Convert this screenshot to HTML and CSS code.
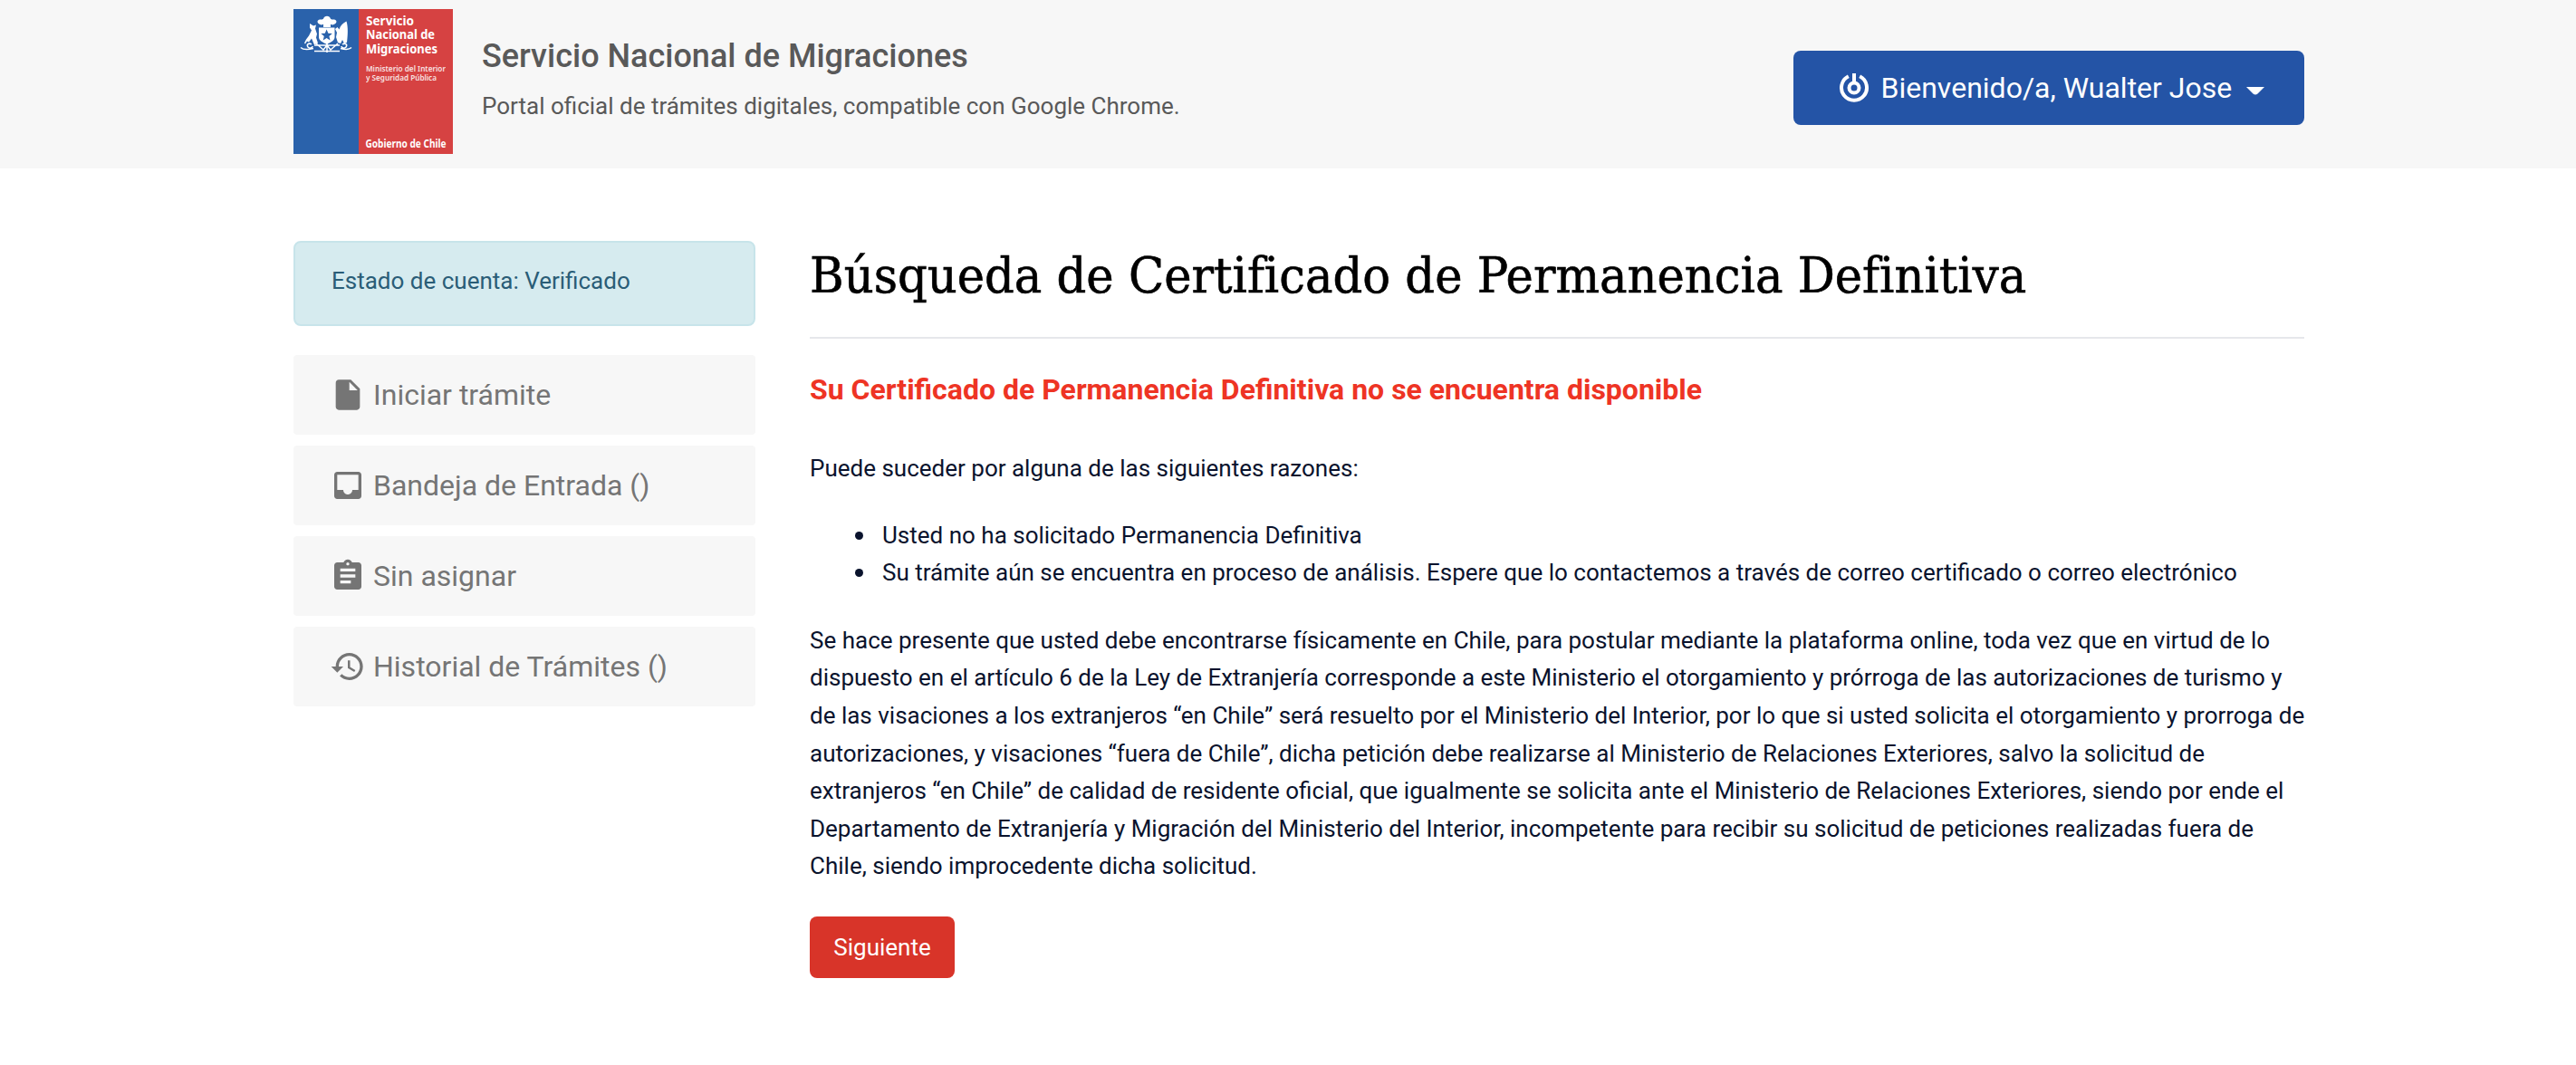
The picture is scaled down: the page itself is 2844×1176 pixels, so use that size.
FILE: index.html
```html
<!DOCTYPE html>
<html lang="es">
<head>
<meta charset="utf-8">
<title>Servicio Nacional de Migraciones</title>
<link rel="stylesheet" href="styles.css">
</head>
<body>
<header class="site-header">
  <div class="container header-row">
    <svg class="logo" viewBox="0 0 176 160" width="176" height="160" role="img" aria-label="Gobierno de Chile">
      <rect width="72" height="160" fill="#2a62ab"/>
      <rect x="72" width="104" height="160" fill="#d64242"/>
      <g fill="#fff">
        <path d="M31 17.500c-5-1-6-5-2-6 1.500.2 3 0 4-.8 1-4 7-4 8 0 1 .9 2.500 1 4 .8 4 1 3 5-2 6l-2-.8V20H33v-3.300z"/>
        <path d="M28 20.500h17.500V31c0 3.500-4 5.500-8.700 8-4.700-2.500-8.800-4.500-8.800-8z"/>
        <path d="M18 16l4 2.500 3-1-1 4 2 6-1 4 2 6-4 2-3-7-3 4-2-1-2 3-1-1 2-4 3-4 3-6-2-3z"/>
        <path d="M58.500 13.500c-4 2-7 5-8 9l-2-2.500-2.500 2 2 4-1 5 2 6 3 1 2-4 2 4 3-1c1-8 1.500-17-.5-23.500z"/>
      </g>
      <path d="M36.600 22.500l1.800 4.300 4.400.3-3.400 3 1.100 4.400-3.900-2.400-3.900 2.400 1.100-4.400-3.400-3 4.400-.3z" fill="#2a62ab"/>
      <path d="M23 40h28M23 46.500h28M25 38l8 7 4-5 4 5 8-7M37 38v10M20 39c-3-2-6 0-4 3 2 2 5 1 5-1M54 39c3-2 6 0 4 3-2 2-5 1-5-1M8 42.500c3 3 10 2 14 1M64 42.500c-3 3-8 2-12 1" fill="none" stroke="#fff" stroke-width="1.500"/>
      <g class="logo-text" fill="#fff">
        <text x="80" y="17.500" font-size="15" textLength="53" lengthAdjust="spacingAndGlyphs">Servicio</text>
        <text x="80" y="33" font-size="15" textLength="76" lengthAdjust="spacingAndGlyphs">Nacional de</text>
        <text x="80" y="48.500" font-size="15" textLength="79" lengthAdjust="spacingAndGlyphs">Migraciones</text>
        <text class="ministry" x="80" y="68.500" font-size="9.500" textLength="88" lengthAdjust="spacingAndGlyphs">Ministerio del Interior</text>
        <text class="ministry" x="80" y="78.800" font-size="9.500" textLength="78" lengthAdjust="spacingAndGlyphs">y Seguridad Pública</text>
        <text x="79.500" y="152.500" font-size="11.500" textLength="89" lengthAdjust="spacingAndGlyphs">Gobierno de Chile</text>
      </g>
    </svg>
    <div class="brand">
      <div class="brand-name">Servicio Nacional de Migraciones</div>
      <div class="brand-sub">Portal oficial de trámites digitales, compatible con Google Chrome.</div>
    </div>
    <button class="user-menu">
      <svg width="34" height="34" viewBox="0 0 34 34" fill="none" stroke="#fff"><path d="M10.800 4.300A14 14 0 1 0 23.200 4.300" stroke-width="4"/><circle cx="17" cy="17" r="5.500" stroke-width="4"/><path d="M17 1v11" stroke-width="4"/></svg>
      <span>Bienvenido/a, Wualter Jose</span>
      <svg class="caret" width="20" height="9" viewBox="0 0 20 9"><path d="M0 0h20l-7.500 7.500q-2.500 2-5 0z" fill="#fff"/></svg>
    </button>
  </div>
</header>
<div class="container page">
  <aside class="sidebar">
    <div class="account">Estado de cuenta: Verificado</div>
    <nav class="menu">
      <a class="item"><svg viewBox="0 0 24 24"><path d="M6 2c-1.100 0-1.990.9-1.990 2L4 20c0 1.100.89 2 1.990 2H18c1.100 0 2-.9 2-2V8l-6-6H6zm7 7V3.500L18.500 9H13z"/></svg><span>Iniciar trámite</span></a>
      <a class="item"><svg viewBox="0 0 24 24"><path d="M19 3H4.990c-1.110 0-1.980.89-1.980 2L3 19c0 1.100.88 2 1.990 2H19c1.100 0 2-.9 2-2V5c0-1.110-.9-2-2-2zm0 12h-4c0 1.660-1.350 3-3 3s-3-1.340-3-3H4.990V5H19v10z"/></svg><span>Bandeja de Entrada ()</span></a>
      <a class="item"><svg viewBox="0 0 24 24"><path d="M19 3h-4.180C14.400 1.840 13.300 1 12 1c-1.300 0-2.400.84-2.820 2H5c-1.100 0-2 .9-2 2v14c0 1.100.9 2 2 2h14c1.100 0 2-.9 2-2V5c0-1.100-.9-2-2-2zm-7 0c.55 0 1 .45 1 1s-.45 1-1 1-1-.45-1-1 .45-1 1-1zm2 14H7v-2h7v2zm3-4H7v-2h10v2zm0-4H7V7h10v2z"/></svg><span>Sin asignar</span></a>
      <a class="item"><svg viewBox="0 0 24 24"><path d="M13 3c-4.970 0-9 4.030-9 9H1l3.890 3.890.07.14L9 12H6c0-3.870 3.130-7 7-7s7 3.130 7 7-3.130 7-7 7c-1.930 0-3.680-.79-4.940-2.060l-1.420 1.420C8.270 19.990 10.510 21 13 21c4.970 0 9-4.030 9-9s-4.030-9-9-9zm-1 5v5l4.280 2.540.72-1.210-3.500-2.080V8H12z"/></svg><span>Historial de Trámites ()</span></a>
    </nav>
  </aside>
  <main class="content">
    <h1><span>Búsqueda de Certificado de Permanencia Definitiva</span></h1>
    <h2>Su Certificado de Permanencia Definitiva no se encuentra disponible</h2>
    <p>Puede suceder por alguna de las siguientes razones:</p>
    <ul>
      <li>Usted no ha solicitado Permanencia Definitiva</li>
      <li>Su trámite aún se encuentra en proceso de análisis. Espere que lo contactemos a través de correo certificado o correo electrónico</li>
    </ul>
    <p>Se hace presente que usted debe encontrarse físicamente en Chile, para postular mediante la plataforma online, toda vez que en virtud de lo<br>dispuesto en el artículo 6 de la Ley de Extranjería corresponde a este Ministerio el otorgamiento y prórroga de las autorizaciones de turismo y<br>de las visaciones a los extranjeros “en Chile” será resuelto por el Ministerio del Interior, por lo que si usted solicita el otorgamiento y prorroga de<br>autorizaciones, y visaciones “fuera de Chile”, dicha petición debe realizarse al Ministerio de Relaciones Exteriores, salvo la solicitud de<br>extranjeros “en Chile” de calidad de residente oficial, que igualmente se solicita ante el Ministerio de Relaciones Exteriores, siendo por ende el<br>Departamento de Extranjería y Migración del Ministerio del Interior, incompetente para recibir su solicitud de peticiones realizadas fuera de<br>Chile, siendo improcedente dicha solicitud.</p>
    <button class="next">Siguiente</button>
  </main>
</div>
</body>
</html>
```
FILE: styles.css
```css
* { box-sizing: border-box; }
body { margin: 0; background: #fff; color: #0a132d; font: 26px/1.6 Roboto, "Liberation Sans", sans-serif; }
.container { width: 2220px; margin: 0 0 0 324px; }
.site-header { background: #f7f7f7; height: 186px; padding-top: 10px; color: #595959; }
.header-row { display: flex; align-items: flex-start; }
.logo { display: block; flex: none; }
.logo-text { font-family: "Noto Sans", sans-serif; font-weight: 700; }
.ministry { font-weight: 600; opacity: .85; }
.brand { margin-left: 32px; padding-top: 30px; flex: 1; }
.brand-name { font-size: 36px; line-height: 44px; font-weight: 500; }
.brand-sub { margin-top: 12px; line-height: 42px; }
.user-menu { width: 564px; height: 82px; margin-top: 46px; display: flex; align-items: center; border: 0; border-radius: 8px; background: #2454a6; color: #fff; font: 32px/48px Roboto, sans-serif; padding: 0 0 0 50px; white-space: nowrap; }
.user-menu span { margin: 0 16px 0 12.500px; }
.caret { margin-top: 6px; }
.page { display: flex; gap: 60px; padding: 80px 0 0; }
.sidebar { width: 510px; flex: none; }
.account { height: 94px; padding: 22px 40px; border: 2px solid #c7e4ea; border-radius: 8px; background: #d6ebef; color: #2a5d77; }
.menu { display: grid; gap: 12px; margin-top: 32px; }
.item { height: 88px; padding-left: 40px; display: flex; align-items: center; gap: 8px; border-radius: 4px; background: #f7f7f7; color: #757575; font-size: 32px; }
.item svg { width: 40px; height: 40px; fill: currentColor; }
.item span { padding-top: 2px; }
.content { flex: 1; }
h1 { margin: 0; height: 108px; border-bottom: 2px solid #e6e7eb; color: #000; font: 400 54px/78px "Roboto Slab", "DejaVu Serif Condensed", "DejaVu Serif", serif; white-space: nowrap; }
h1 span { display: inline-block; transform: scaleX(1.0545); transform-origin: left; -webkit-text-stroke: .6px #000; }
h2 { margin: 31px 0 42px; color: #ee3424; font-size: 32px; line-height: 50px; font-weight: 700; }
p { margin: 0 0 32px; white-space: nowrap; }
ul { margin: 0 0 33px; padding-left: 80px; list-style: none; }
li::before { content: ""; display: inline-block; width: 9px; height: 9px; margin: 0 21px 0 -30px; border-radius: 50%; background: currentColor; vertical-align: 4px; }
.next { display: block; width: 160px; height: 68px; margin-top: 34px; border: 0; border-radius: 8px; background: #d83429; color: #fff; font: 26px/42px Roboto, sans-serif; }
```
